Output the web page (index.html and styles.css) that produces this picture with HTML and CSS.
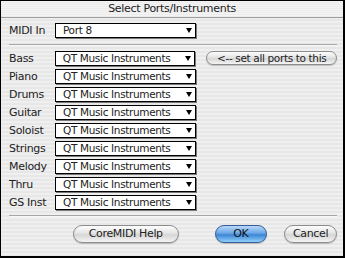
FILE: index.html
```html
<!DOCTYPE html>
<html>
<head>
<meta charset="utf-8">
<link rel="stylesheet" href="styles.css">
</head>
<body>
<div class="window">
  <div class="titlebar">Select Ports/Instruments</div>
  <div class="content">
    <div class="row row-midi">
      <span class="label">MIDI In</span>
      <div class="popup"><span class="value">Port 8</span><span class="arrow"></span></div>
    </div>
    <div class="sep"></div>
    <div class="rows">
      <div class="row">
        <span class="label">Bass</span>
        <div class="popup"><span class="value">QT Music Instruments</span><span class="arrow"></span></div>
        <button class="btn btn-setall">&lt;-- set all ports to this</button>
      </div>
      <div class="row">
        <span class="label">Piano</span>
        <div class="popup"><span class="value">QT Music Instruments</span><span class="arrow"></span></div>
      </div>
      <div class="row">
        <span class="label">Drums</span>
        <div class="popup"><span class="value">QT Music Instruments</span><span class="arrow"></span></div>
      </div>
      <div class="row">
        <span class="label">Guitar</span>
        <div class="popup"><span class="value">QT Music Instruments</span><span class="arrow"></span></div>
      </div>
      <div class="row">
        <span class="label">Soloist</span>
        <div class="popup"><span class="value">QT Music Instruments</span><span class="arrow"></span></div>
      </div>
      <div class="row">
        <span class="label">Strings</span>
        <div class="popup"><span class="value">QT Music Instruments</span><span class="arrow"></span></div>
      </div>
      <div class="row">
        <span class="label">Melody</span>
        <div class="popup"><span class="value">QT Music Instruments</span><span class="arrow"></span></div>
      </div>
      <div class="row">
        <span class="label">Thru</span>
        <div class="popup"><span class="value">QT Music Instruments</span><span class="arrow"></span></div>
      </div>
      <div class="row">
        <span class="label">GS Inst</span>
        <div class="popup"><span class="value">QT Music Instruments</span><span class="arrow"></span></div>
      </div>
    </div>
    <div class="sep sep-bottom"></div>
    <div class="buttons">
      <button class="btn btn-help">CoreMIDI Help</button>
      <button class="btn btn-ok">OK</button>
      <button class="btn btn-cancel">Cancel</button>
    </div>
  </div>
</div>
</body>
</html>
```
FILE: styles.css
```css
* { box-sizing: border-box; }
html, body { margin: 0; padding: 0; }
body {
  width: 345px;
  height: 258px;
  overflow: hidden;
  font-family: "DejaVu Sans", sans-serif;
  font-size: 11px;
  color: #222;
}
.window {
  width: 345px;
  height: 258px;
  border-style: solid;
  border-color: #000;
  border-width: 1px 2px 2px 1px;
  background: repeating-linear-gradient(to bottom, #efefef 0, #efefef 2px, #e7e7e7 2px, #e7e7e7 4px);
  display: flex;
  flex-direction: column;
}
.titlebar {
  height: 17px;
  line-height: 15px;
  text-align: center;
  font-size: 11px;
  color: #222;
  background: repeating-linear-gradient(to bottom, #f4f4f4 0, #f4f4f4 1px, #ececec 1px, #ececec 2px);
  border-bottom: 1px solid #9c9c9c;
  letter-spacing: -0.3px;
}
.content {
  padding: 5px 6px 0 7px;
  display: flex;
  flex-direction: column;
}
.row {
  display: flex;
  align-items: center;
  height: 18px;
}
.row-midi { height: 15px; }
.label {
  width: 47px;
  letter-spacing: -0.3px;
  padding-left: 1px;
}
.popup {
  width: 141px;
  height: 15px;
  background: #fff;
  border: 1px solid #000;
  box-shadow: 1px 1px 0 #7a7a7a;
  display: flex;
  align-items: center;
  padding-left: 7px;
  position: relative;
}
.value {
  font-size: 10.5px;
  letter-spacing: -0.35px;
  line-height: 13px;
}
.arrow {
  position: absolute;
  right: 3px;
  top: 4px;
  width: 0;
  height: 0;
  border-left: 3.5px solid transparent;
  border-right: 3.5px solid transparent;
  border-top: 5px solid #000;
}
.sep {
  background: #a6a6a6;
  margin: 6px 0 5px 1px;
  border-bottom: 1px solid #f8f8f8;
  height: 2px;
}
.rows {
  display: flex;
  flex-direction: column;
  margin-top: -2px;
}
.sep-bottom { margin-top: 4px; margin-bottom: 8px; }
.btn {
  font-family: "DejaVu Sans", sans-serif;
  font-size: 11px;
  letter-spacing: -0.35px;
  color: #222;
  height: 15px;
  border: 1px solid #8c8c8c;
  border-radius: 8px;
  background: linear-gradient(to bottom, #fdfdfd 0%, #e4e4e4 45%, #d6d6d6 55%, #f4f4f4 100%);
  box-shadow: 0 1px 1px rgba(0,0,0,0.2);
  padding: 0;
  line-height: 13px;
}
.btn-setall {
  width: 131px;
  height: 14px;
  margin-left: 11px;
  font-size: 10.5px;
}
.buttons {
  display: flex;
  height: 18px;
  align-items: center;
}
.buttons .btn { height: 18px; border-radius: 9px; line-height: 16px; }
.btn-help { width: 106px; margin-left: 65px; }
.btn-ok {
  width: 53px;
  margin-left: 36px;
  border-color: #355d97;
  background: linear-gradient(to bottom, #b8d8f8 0%, #6aa6e6 45%, #3d85d6 55%, #8fd0fb 100%);
  color: #111;
}
.btn-cancel { width: 53px; margin-left: 17px; }
```
